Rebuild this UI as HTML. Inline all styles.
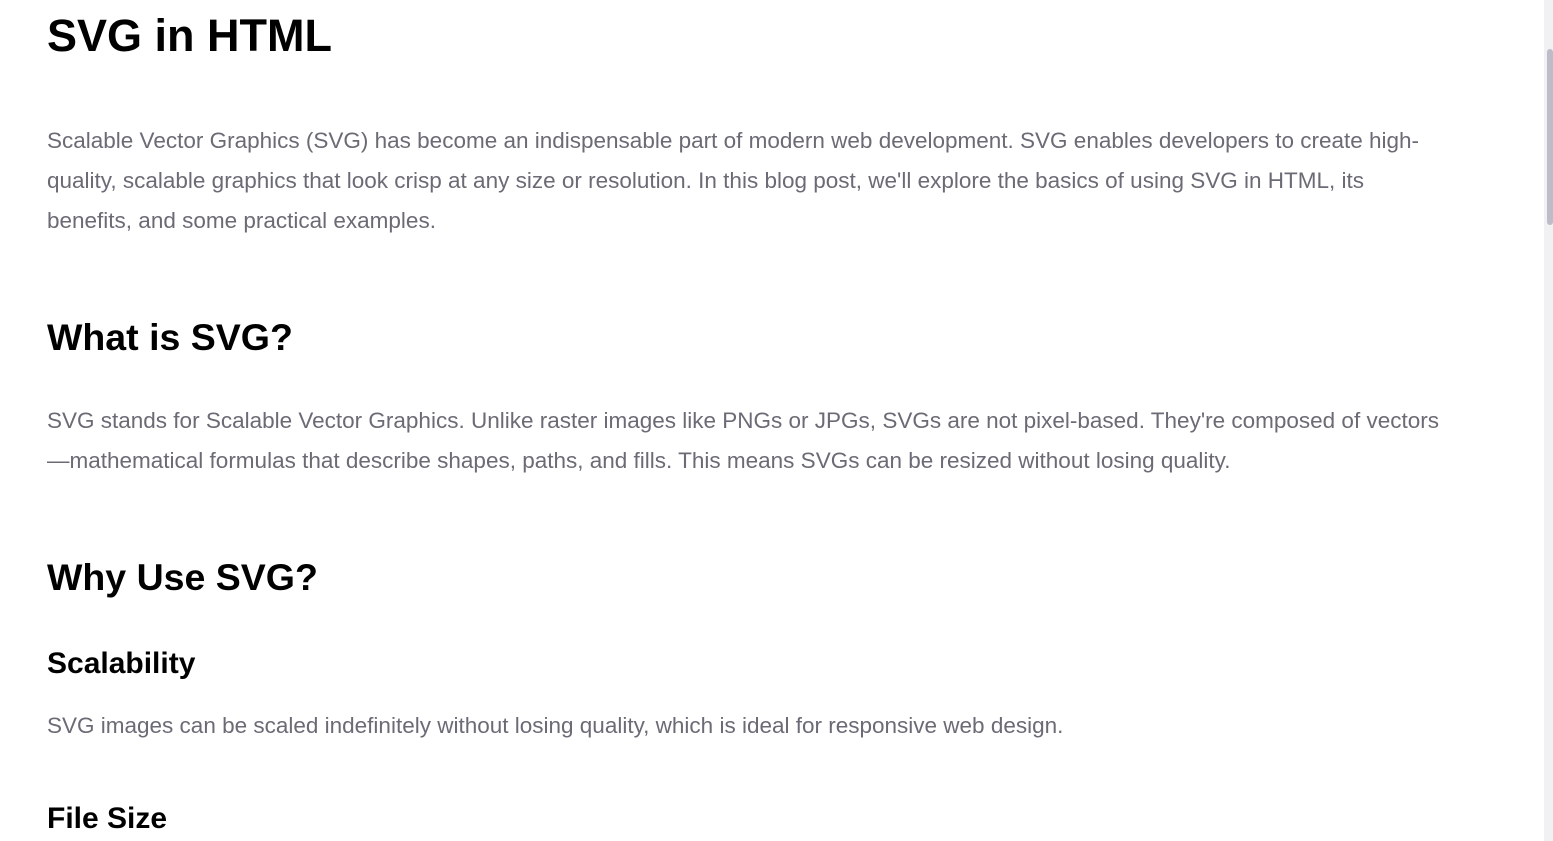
<!DOCTYPE html>
<html><head><meta charset="utf-8"><style>
html,body{margin:0;padding:0;background:#fff;width:1553px;height:841px;overflow:hidden;font-family:"Liberation Sans",Arial,sans-serif}
.t{position:absolute;left:47px;white-space:nowrap;margin:0}
h1.t{font-size:45px;line-height:60px;top:6px;color:#000;font-weight:bold}
h2.t{font-size:37.5px;line-height:50px;color:#000;font-weight:bold}
h3.t{font-size:30px;line-height:40px;color:#000;font-weight:bold}
p.t{font-size:22.5px;line-height:40px;color:#6b6b76}
.sb{position:absolute;left:1544px;top:0;width:9px;height:841px;background:#f1f1f4}
.th{position:absolute;left:1547px;top:49px;width:6px;height:176px;background:#bdbcc8;border-radius:3px}
</style></head><body>
<h1 class="t">SVG in HTML</h1>
<p class="t" style="top:121px">Scalable Vector Graphics (SVG) has become an indispensable part of modern web development. SVG enables developers to create high-<br>quality, scalable graphics that look crisp at any size or resolution. In this blog post, we'll explore the basics of using SVG in HTML, its<br>benefits, and some practical examples.</p>
<h2 class="t" style="top:312px">What is SVG?</h2>
<p class="t" style="top:401px">SVG stands for Scalable Vector Graphics. Unlike raster images like PNGs or JPGs, SVGs are not pixel-based. They're composed of vectors<br>—mathematical formulas that describe shapes, paths, and fills. This means SVGs can be resized without losing quality.</p>
<h2 class="t" style="top:552px">Why Use SVG?</h2>
<h3 class="t" style="top:644px">Scalability</h3>
<p class="t" style="top:706px">SVG images can be scaled indefinitely without losing quality, which is ideal for responsive web design.</p>
<h3 class="t" style="top:799px">File Size</h3>
<div class="sb"></div><div class="th"></div>
</body></html>
